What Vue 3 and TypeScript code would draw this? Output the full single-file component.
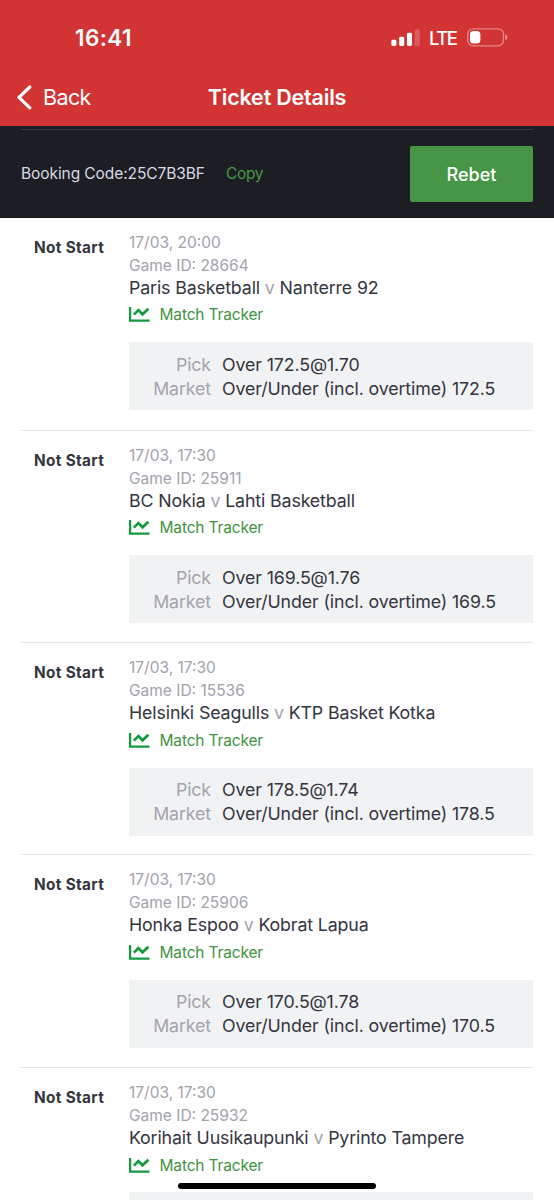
<script setup lang="ts">
interface Match {
  id: string
  time: string
  home: string
  away: string
  pick?: string
  line?: string
}

const matches: Match[] = [
  { id: '28664', time: '17/03, 20:00', home: 'Paris Basketball', away: 'Nanterre 92', pick: 'Over 172.5@1.70', line: '172.5' },
  { id: '25911', time: '17/03, 17:30', home: 'BC Nokia', away: 'Lahti Basketball', pick: 'Over 169.5@1.76', line: '169.5' },
  { id: '15536', time: '17/03, 17:30', home: 'Helsinki Seagulls', away: 'KTP Basket Kotka', pick: 'Over 178.5@1.74', line: '178.5' },
  { id: '25906', time: '17/03, 17:30', home: 'Honka Espoo', away: 'Kobrat Lapua', pick: 'Over 170.5@1.78', line: '170.5' },
  { id: '25932', time: '17/03, 17:30', home: 'Korihait Uusikaupunki', away: 'Pyrinto Tampere' },
]
</script>

<template>
  <div class="screen">
    <header class="header">
      <div class="status-bar">
        <span class="clock">16:41</span>
        <div class="indicators">
          <svg class="signal" width="29" height="18" viewBox="0 0 29 18" fill="#fff">
            <rect x="0.4" y="10.8" width="5" height="6.2" rx="1.4" />
            <rect x="8.2" y="7.8" width="5" height="9.2" rx="1.4" />
            <rect x="16" y="3.8" width="5" height="13.2" rx="1.4" />
            <rect x="23.7" y="0.4" width="5" height="16.6" rx="1.4" opacity="0.2" />
          </svg>
          <span class="network">LTE</span>
          <svg class="battery" width="41" height="19" viewBox="0 0 41 19">
            <rect x="0.8" y="0.8" width="35.6" height="17" rx="5.2" fill="none" stroke="#fff" stroke-opacity="0.4" stroke-width="1.3" />
            <rect x="3" y="3" width="10.4" height="12.6" rx="3.6" fill="#fff" />
            <path d="M38.2 6.3c1.5.7 2.2 1.7 2.2 3s-.7 2.3-2.2 3z" fill="#fff" opacity="0.45" />
          </svg>
        </div>
      </div>
      <nav class="nav">
        <div class="back">
          <svg width="16" height="25" viewBox="0 0 16 25" fill="none" stroke="#fff" stroke-width="3.2" stroke-linecap="round" stroke-linejoin="round">
            <path d="M13.8 2L3 12.4L13.8 22.8" />
          </svg>
          <span class="back-label">Back</span>
        </div>
        <h1 class="title">Ticket Details</h1>
      </nav>
    </header>

    <section class="booking">
      <div class="booking-row">
        <span class="code">Booking Code:25C7B3BF</span>
        <span class="copy">Copy</span>
        <button class="rebet" type="button">Rebet</button>
      </div>
    </section>

    <main>
      <article v-for="match in matches" :key="match.id" class="match">
        <div class="state">Not Start</div>
        <div class="info">
          <div class="meta">{{ match.time }}</div>
          <div class="meta">Game ID: {{ match.id }}</div>
          <div class="teams">{{ match.home }} <span class="versus">v</span> {{ match.away }}</div>
          <div class="tracker">
            <svg width="21" height="15" viewBox="0 0 21 15" fill="none" stroke="#119b3c">
              <path d="M1.1 0V13.6H20.5" stroke-width="2.2" />
              <path d="M4.900 7.600L9.400 3.100L13.500 7.300L19.400 1.700" stroke-width="2.700" />
            </svg>
            <span>Match Tracker</span>
          </div>
          <dl class="selection">
            <template v-if="match.pick">
              <dt>Pick</dt>
              <dd>{{ match.pick }}</dd>
              <dt>Market</dt>
              <dd>Over/Under (incl. overtime) {{ match.line }}</dd>
            </template>
          </dl>
        </div>
      </article>
    </main>
    <div class="home-indicator"></div>
  </div>
</template>

<style>
body {
  background: #fff;
}
</style>

<style scoped>
.screen {
  position: relative;
  height: 1200px;
  overflow: hidden;
  background: #fff;
  color: #34353f;
  font-family: Inter, "Liberation Sans", sans-serif;
  font-size: 15.5px;
}
.header {
  height: 126px;
  background: #d23434;
  color: #fff;
}
.status-bar {
  display: flex;
  justify-content: space-between;
  height: 70px;
  padding: 0 46px 0 75px;
}
.clock {
  margin-top: 24px;
  font-size: 22.5px;
  font-weight: 600;
  line-height: 28px;
  letter-spacing: 0.4px;
}
.indicators {
  display: flex;
  align-items: flex-start;
}
.signal {
  margin-top: 29px;
}
.network {
  margin: 26px 0 0 9px;
  width: 38px;
  font-size: 18.5px;
  font-weight: 500;
  line-height: 24px;
  letter-spacing: -1.5px;
}
.battery {
  margin-top: 28px;
}
.nav {
  display: grid;
  grid-template-columns: 1fr auto 1fr;
  align-items: center;
  height: 54px;
}
.back {
  display: flex;
  align-items: center;
  padding-left: 16px;
}
.back-label {
  margin-left: 11px;
  font-size: 21.5px;
  letter-spacing: -0.6px;
}
.title {
  margin: 0;
  font-size: 21.5px;
  font-weight: 600;
  letter-spacing: -0.2px;
}
.booking {
  box-sizing: border-box;
  height: 91.5px;
  padding: 3px 21px 0;
  background: #1d1e24;
  border-bottom: 1px solid #111217;
}
.booking-row {
  display: flex;
  align-items: center;
  height: 88px;
  border-top: 1px solid #3a3c42;
}
.code {
  margin-top: -2px;
  color: #d9dae2;
  letter-spacing: -0.08px;
}
.copy {
  margin: -2px 0 0 21px;
  color: #469846;
  letter-spacing: -0.3px;
}
.rebet {
  width: 123px;
  height: 56px;
  margin-left: auto;
  padding: 0;
  border: 0;
  border-radius: 2px;
  background: #479646;
  color: #fff;
  font: 500 18px Inter, sans-serif;
}
.match {
  box-sizing: border-box;
  display: flex;
  height: 212.4px;
  margin: 0 21px;
  padding-top: 13px;
  border-bottom: 1px solid #e5e6ee;
}
.match:first-child {
  height: 213px;
}
.state {
  width: 95px;
  padding: 6px 0 0 13px;
  box-sizing: border-box;
  font-size: 15.3px;
  font-weight: 700;
  line-height: 22px;
  letter-spacing: 0.35px;
}
.info {
  width: 404px;
  margin-left: 13px;
  white-space: nowrap;
}
.meta {
  height: 23px;
  color: #a1a3ad;
  line-height: 24px;
}
.teams {
  height: 24px;
  font-size: 17.8px;
  line-height: 21.6px;
  letter-spacing: -0.14px;
}
.versus {
  color: #a1a3ad;
}
.tracker {
  display: flex;
  align-items: center;
  gap: 9.5px;
  height: 24px;
  margin-top: 2.4px;
  color: #3f9441;
  letter-spacing: -0.16px;
}
.selection {
  box-sizing: border-box;
  display: grid;
  grid-template-columns: 82px 1fr;
  grid-auto-rows: 24px;
  column-gap: 11px;
  height: 68px;
  margin: 15.3px 0 0;
  padding-top: 10.5px;
  background: #f1f2f4;
  font-size: 17.8px;
  line-height: 24px;
  letter-spacing: -0.12px;
}
.selection dt {
  color: #a1a3ad;
  text-align: right;
}
.selection dd {
  margin: 0;
}
.home-indicator {
  position: absolute;
  left: 178px;
  top: 1183px;
  width: 198px;
  height: 6px;
  border-radius: 3px;
  background: #000;
}
</style>
